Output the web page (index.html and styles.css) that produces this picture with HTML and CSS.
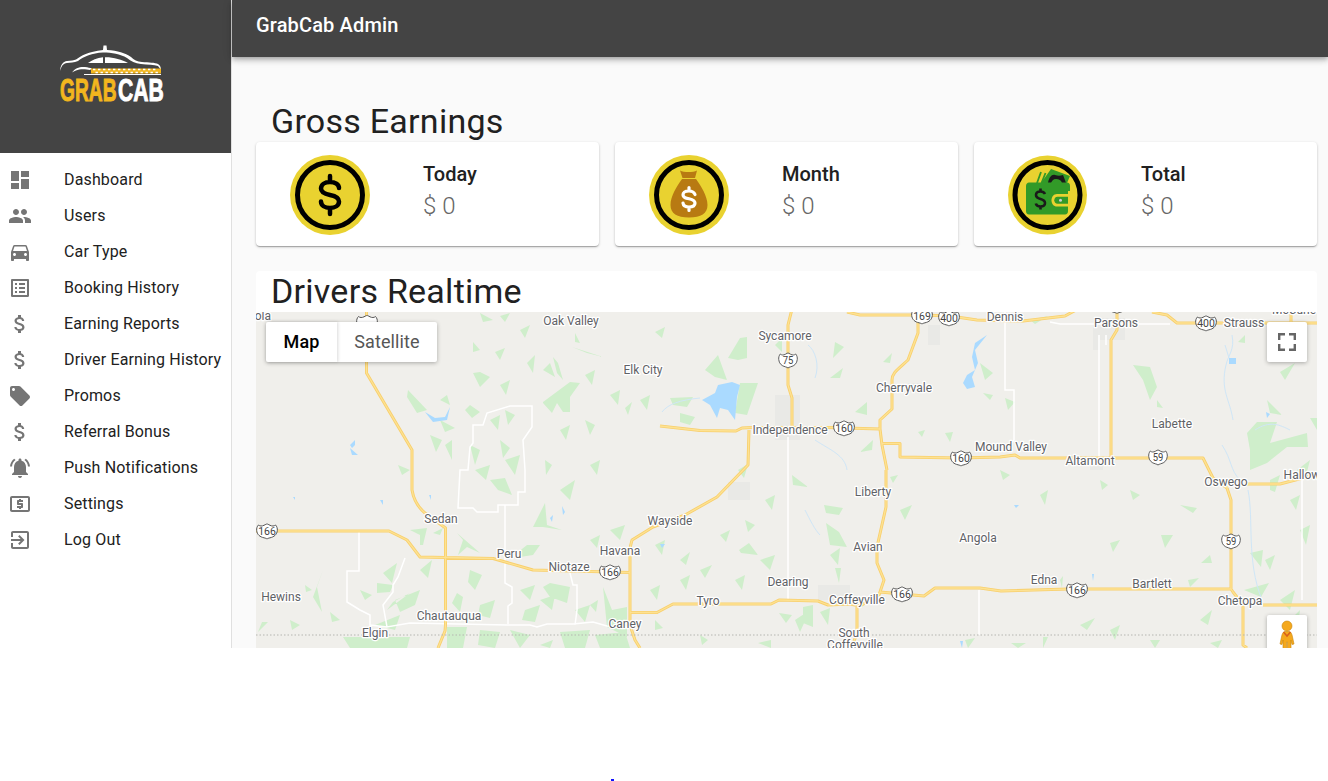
FILE: index.html
```html
<!DOCTYPE html>
<html lang="en">
<head>
<meta charset="utf-8">
<title>GrabCab Admin</title>
<link rel="stylesheet" href="styles.css">
</head>
<body>
<div class="app">
  <aside class="drawer">
    <div class="brand">
      <svg class="logo" viewBox="56 42 112 62" width="112" height="62">
        <path class="logo-w" d="M60 71C60.500 65 63 61.500 67 61C71 60.500 74 60.500 76 59.500C81 56 88 51.500 103 50L103.500 45.500H106.500L107 50C118 50.500 125 53 131 57C134 60 137 61.500 142 62C149 62.500 155 62.500 158 64C160.500 65.500 161 68 161 70L158 66C154 65 148 64.500 141 64C135 63.500 131 61 127 58C120 54 112 52.500 103 52.500C92 53 84 56.500 78 61C74 62.800 70 62.800 67 63C63 63.500 61.500 66 60 71Z"/>
        <path class="logo-w" d="M88 63C92 60 97 58 103 57.300V63ZM105 57.200C113 57 122 59.500 128 63H105Z"/>
        <path class="logo-w" d="M72 72.500C75 68 80 66.500 85 67C88 67.300 90 68 92 68.500L90 70C86 69 80 68.500 76 70.500C74.500 71 73 72 72 72.500Z"/>
        <rect class="logo-y" x="91" y="68.500" width="70" height="5"/>
        <path class="logo-check" d="M93 69.500h2.400M98 69.500h2.400M103 69.500h2.400M108 69.500h2.400M113 69.500h2.400M118 69.500h2.400M123 69.500h2.400M128 69.500h2.400M133 69.500h2.400M138 69.500h2.400M143 69.500h2.400M148 69.500h2.400M153 69.500h2.400M95.500 72.500h2.400M100.500 72.500h2.400M105.500 72.500h2.400M110.500 72.500h2.400M115.500 72.500h2.400M120.500 72.500h2.400M125.500 72.500h2.400M130.500 72.500h2.400M135.500 72.500h2.400M140.500 72.500h2.400M145.500 72.500h2.400M150.500 72.500h2.400M155.500 72.500h2.400"/>
        <rect class="logo-w" x="84" y="74" width="77" height="1"/>
        <text class="logo-t logo-grab" transform="translate(60 101) scale(.6 1)">GRAB</text>
        <text class="logo-t logo-cab" transform="translate(118 101) scale(.66 1)">CAB</text>
      </svg>
    </div>
    <nav class="menu">
      <a class="item"><svg class="ico" viewBox="0 0 24 24"><path d="M3 13h8V3H3v10zm0 8h8v-6H3v6zm10 0h8V11h-8v10zm0-18v6h8V3h-8z"/></svg><span>Dashboard</span></a>
      <a class="item"><svg class="ico" viewBox="0 0 24 24"><path d="M16 11c1.660 0 2.990-1.340 2.990-3S17.660 5 16 5c-1.660 0-3 1.340-3 3s1.340 3 3 3zm-8 0c1.660 0 2.990-1.340 2.990-3S9.660 5 8 5C6.340 5 5 6.340 5 8s1.340 3 3 3zm0 2c-2.330 0-7 1.170-7 3.500V19h14v-2.500c0-2.330-4.670-3.500-7-3.500zm8 0c-.290 0-.620.020-.970.050 1.160.840 1.970 1.970 1.970 3.450V19h6v-2.500c0-2.330-4.670-3.500-7-3.500z"/></svg><span>Users</span></a>
      <a class="item"><svg class="ico" viewBox="0 0 24 24"><path d="M18.920 6.010C18.720 5.420 18.160 5 17.500 5h-11c-.660 0-1.210.420-1.420 1.010L3 12v8c0 .550.450 1 1 1h1c.550 0 1-.450 1-1v-1h12v1c0 .550.450 1 1 1h1c.550 0 1-.450 1-1v-8l-2.080-5.990zM6.500 16c-.830 0-1.500-.670-1.500-1.500S5.670 13 6.500 13s1.500.670 1.500 1.500S7.330 16 6.500 16zm11 0c-.830 0-1.500-.670-1.500-1.500s.670-1.500 1.500-1.500 1.500.670 1.500 1.500-.670 1.500-1.500 1.500zM5 11l1.500-4.500h11L19 11H5z"/></svg><span>Car Type</span></a>
      <a class="item"><svg class="ico" viewBox="0 0 24 24"><path d="M19 5v14H5V5h14m1.100-2H3.900c-.500 0-.900.400-.900.900v16.200c0 .400.400.900.900.900h16.200c.400 0 .900-.500.900-.900V3.900c0-.500-.500-.900-.900-.900zM11 7h6v2h-6V7zm0 4h6v2h-6v-2zm0 4h6v2h-6v-2zM7 7h2v2H7V7zm0 4h2v2H7v-2zm0 4h2v2H7v-2z"/></svg><span>Booking History</span></a>
      <a class="item"><svg class="ico" viewBox="0 0 24 24"><path d="M11.800 10.900c-2.270-.590-3-1.200-3-2.150 0-1.090 1.010-1.850 2.700-1.850 1.780 0 2.440.850 2.500 2.100h2.210c-.070-1.720-1.120-3.300-3.210-3.810V3h-3v2.160c-1.940.420-3.500 1.680-3.500 3.610 0 2.310 1.910 3.460 4.700 4.130 2.500.600 3 1.480 3 2.410 0 .690-.490 1.790-2.700 1.790-2.060 0-2.870-.920-2.980-2.100h-2.200c.120 2.190 1.760 3.420 3.680 3.830V21h3v-2.150c1.950-.370 3.500-1.500 3.500-3.550 0-2.840-2.430-3.810-4.700-4.400z"/></svg><span>Earning Reports</span></a>
      <a class="item"><svg class="ico" viewBox="0 0 24 24"><path d="M11.800 10.900c-2.270-.590-3-1.200-3-2.150 0-1.090 1.010-1.850 2.700-1.850 1.780 0 2.440.850 2.500 2.100h2.210c-.070-1.720-1.120-3.300-3.210-3.810V3h-3v2.160c-1.940.420-3.500 1.680-3.500 3.610 0 2.310 1.910 3.460 4.700 4.130 2.500.600 3 1.480 3 2.410 0 .690-.490 1.790-2.700 1.790-2.060 0-2.870-.920-2.980-2.100h-2.200c.120 2.190 1.760 3.420 3.680 3.830V21h3v-2.150c1.950-.370 3.500-1.500 3.500-3.550 0-2.840-2.430-3.810-4.700-4.400z"/></svg><span>Driver Earning History</span></a>
      <a class="item"><svg class="ico" viewBox="0 0 24 24"><path d="M21.410 11.580l-9-9C12.050 2.220 11.550 2 11 2H4c-1.100 0-2 .900-2 2v7c0 .550.220 1.050.590 1.420l9 9c.360.360.860.580 1.410.580.550 0 1.050-.220 1.410-.590l7-7c.370-.360.590-.860.590-1.410 0-.550-.230-1.060-.590-1.420zM5.500 7C4.670 7 4 6.330 4 5.500S4.670 4 5.500 4 7 4.670 7 5.500 6.330 7 5.500 7z"/></svg><span>Promos</span></a>
      <a class="item"><svg class="ico" viewBox="0 0 24 24"><path d="M11.800 10.900c-2.270-.590-3-1.200-3-2.150 0-1.090 1.010-1.850 2.700-1.850 1.780 0 2.440.850 2.500 2.100h2.210c-.070-1.720-1.120-3.300-3.210-3.810V3h-3v2.160c-1.940.420-3.500 1.680-3.500 3.610 0 2.310 1.910 3.460 4.700 4.130 2.500.600 3 1.480 3 2.410 0 .690-.490 1.790-2.700 1.790-2.060 0-2.870-.920-2.980-2.100h-2.200c.120 2.190 1.760 3.420 3.680 3.830V21h3v-2.150c1.950-.370 3.500-1.500 3.500-3.550 0-2.840-2.430-3.810-4.700-4.400z"/></svg><span>Referral Bonus</span></a>
      <a class="item"><svg class="ico" viewBox="0 0 24 24"><path d="M7.580 4.080L6.150 2.650C3.750 4.480 2.170 7.300 2.030 10.500h2c.150-2.650 1.510-4.970 3.550-6.420zm12.390 6.420h2c-.150-3.200-1.730-6.020-4.120-7.850l-1.420 1.430c2.020 1.450 3.390 3.770 3.540 6.420zM18 11c0-3.070-1.640-5.640-4.500-6.320V4c0-.830-.670-1.500-1.500-1.500s-1.500.670-1.500 1.500v.680C7.630 5.360 6 7.920 6 11v5l-2 2v1h16v-1l-2-2v-5zm-6 11c.140 0 .270-.010.400-.040.650-.140 1.180-.580 1.440-1.180.100-.240.150-.500.150-.780h-4c.010 1.100.900 2 2.010 2z"/></svg><span>Push Notifications</span></a>
      <a class="item"><svg class="ico" viewBox="0 0 24 24"><path d="M11 17h2v-1h1c.550 0 1-.450 1-1v-3c0-.550-.450-1-1-1h-3v-1h4V8h-2V7h-2v1h-1c-.550 0-1 .450-1 1v3c0 .550.450 1 1 1h3v1H9v2h2v1zm9-13H4c-1.110 0-1.990.890-1.990 2L2 18c0 1.110.890 2 2 2h16c1.110 0 2-.890 2-2V6c0-1.110-.890-2-2-2zm0 14H4V6h16v12z"/></svg><span>Settings</span></a>
      <a class="item"><svg class="ico" viewBox="0 0 24 24"><path d="M10.090 15.590L11.500 17l5-5-5-5-1.410 1.410L12.670 11H3v2h9.670l-2.580 2.590zM19 3H5c-1.110 0-2 .900-2 2v4h2V5h14v14H5v-4H3v4c0 1.100.890 2 2 2h14c1.100 0 2-.900 2-2V5c0-1.100-.900-2-2-2z"/></svg><span>Log Out</span></a>
    </nav>
  </aside>
  <div class="content">
    <header class="appbar">GrabCab Admin</header>
    <main class="main">
      <h2 class="title">Gross Earnings</h2>
      <section class="cards">
        <article class="card">
          <svg class="badge" viewBox="0 0 80 80" width="80" height="80">
            <circle class="b-y" cx="40" cy="40" r="40"/><circle class="b-r" cx="40" cy="40" r="32.500"/>
            <path class="b-d" d="M49 33C49 29.500 45 27 40 27C35 27 31 29.500 31 33.500C31 37.500 35 39 40 40C45 41 49 42.500 49 46.500C49 50.500 45 53 40 53C35 53 31 50.500 31 46.500M40 21V27M40 53V59"/>
          </svg>
          <div class="stat"><div class="stat-name">Today</div><div class="stat-val">$ 0</div></div>
        </article>
        <article class="card">
          <svg class="badge" viewBox="0 0 80 80" width="80" height="80">
            <circle class="b-y" cx="40" cy="40" r="40"/><circle class="b-r" cx="40" cy="40" r="32.500"/>
            <path class="b-bag" d="M31 15.500C35 17.500 44 17.500 48 15.500L46 23H33.500ZM33 24H47C52 31 58.500 41 58.500 50C58.500 58.500 52 62.500 40 62.500C28 62.500 21.500 58.500 21.500 50C21.500 41 28 31 33 24Z"/>
            <path class="b-s" d="M46 39.500C45 37 43 36 40 36C36.500 36 34 37.500 34 40C34 42.500 36.500 43 40 43.700C43.500 44.500 46 45.500 46 48C46 50.500 43.500 52 40 52C36.500 52 34.300 50.500 34 48M40 32.500V36M40 52V55.500"/>
          </svg>
          <div class="stat"><div class="stat-name">Month</div><div class="stat-val">$ 0</div></div>
        </article>
        <article class="card">
          <svg class="badge" viewBox="0 0 80 80" width="80" height="80">
            <circle class="b-y" cx="39.500" cy="40" r="39.500"/><circle class="b-r" cx="39.500" cy="40" r="32.500"/>
            <path class="w-g" d="M33 28L43 14L62 21L59 28Z"/>
            <path class="w-k" d="M40 28C41 22 44 19 47 20C50 21 52 21 55 20C56 22 57 25 58 28H54C53 25 51 24 48 24C45 24 44 26 43 28Z"/>
            <path class="w-l" d="M29 28L33 17M33.500 28L37.500 18M38 28L40.500 21"/>
            <path class="w-g" d="M18 31C18 29 19.500 27.500 21 27.500H59C61 27.500 62 29 62 31V36H60V56C60 58 59 59.500 57 59.500H21C19 59.500 18 58 18 56Z"/>
            <path class="w-f" d="M49 39H62V51.500H49C45.500 51.500 43.500 48.500 43.500 45.200C43.500 42 45.500 39 49 39Z"/>
            <path class="w-g" d="M49.500 41.800H60V48.700H49.500C47.500 48.700 46.300 47 46.300 45.200C46.300 43.500 47.500 41.800 49.500 41.800Z"/>
            <circle class="w-dot" cx="52.500" cy="45.300" r="1.500"/>
            <path class="w-s" d="M37 39C36 37 35 36.500 32.500 36.500C29.800 36.500 28 37.800 28 40C28 42.500 30 43.300 32.500 44C35 44.700 37 45.700 37 48C37 50.300 35 51.500 32.500 51.500C30 51.500 28.300 50.500 27.800 48.500M32.500 33.500V36.500M32.500 51.500V54.500"/>
          </svg>
          <div class="stat"><div class="stat-name">Total</div><div class="stat-val">$ 0</div></div>
        </article>
      </section>
      <section class="panel">
        <h2 class="title title-panel">Drivers Realtime</h2>
        <div class="map">
          <svg class="map-art" viewBox="256 312 1061 336" width="1061" height="336">
            <defs>
              <path id="sh3" d="M1.500 1.500C3 2.800 5 2.800 7 1.800C8.500 1 9.500.5 10 .5C10.500.5 11.500 1 13 1.800C15 2.800 17 2.800 18.500 1.500C20 3 20.500 5 20.300 7C20 11 17 13.500 13 14.300C11.800 14.600 10.500 15 10 15.500C9.500 15 8.200 14.600 7 14.300C3 13.500 0 11 -.3 7C-.5 5 0 3 1.500 1.500Z"/>
              <path id="roads" d="M366.500 305V373L412 450V490C414 502 419 508 425 513L445.500 528V625L445 631L438 648M256 531H389L407 540L420 557L493 558.500L533 570L630 572.500M749 430L748 465L717 497L685 515L653 527L632 540L630 548V625L635 640L640 648M630 612.500H657L673 604H771L779 600L818 601L828 605L850 604L860 606L879 595L880 592L924 596L935 588H980L1001 591L1069 589H1231M886 470V507L877 547V563L884 580L880 592M1227 488L1231 500V589L1233 592L1243 605V645L1247 648M1263 605H1317M857 606V632L852 648M793 305L788 325V385L792 398V427M660 426L700 430.500L736 431L742 428L752 427.500H828L880 429L882 445L887 470M880 429V420L892 409V380C892 373 897 370 908 360L918 333V316M847 312L860 315H922L950 316L977 320L1023 321L1065 316L1076 310M882 443.500H900V457L960 458L1000 457L1015 455L1020 458L1203 458L1213 478L1227 488M1247 484H1280L1303 478L1320 472M1117 305V330L1111 340V457M1152 312L1167 315L1177 323H1320M1291 312V323"/>
            </defs>
            <rect class="m-bg" x="256" y="312" width="1061" height="336"/>
            <path class="m-town" d="M775 395H800V440H775ZM928 325H940V345H928ZM1093 318H1125V340H1100V350H1093ZM818 585H850V600H818ZM728 482H750V500H728ZM908 383H920V392H908ZM1090 462H1103V470H1090Z"/>
            <path class="m-green" d="M408 390L427 410L417 413L407 397ZM543 402L570 382L580 383L570 397V412H563L557 403L552 413L543 403ZM572 347L603 357L587 353ZM527 363L535 355L533 373ZM543 370L550 363L555 377ZM553 357L558 363L563 380L557 373ZM473 373L480 372L490 377L480 387ZM473 342L480 350L473 352ZM575 333L580 343L575 342ZM410 530L427 528L423 545H420V535ZM433 533L443 528L440 535ZM457 533L480 553L467 547L458 555L463 540ZM533 527L545 503L547 525L562 530L543 527ZM517 553L527 545H540L533 555L520 557ZM377 583L393 585L390 592L377 593ZM383 573L397 563L392 583ZM387 610L410 593L393 602ZM313 597L323 570L317 587L322 612ZM550 583L570 587L567 603L550 597L543 587ZM457 593L463 597L460 612L452 603ZM603 587L612 610L627 607V637L607 627ZM343 637H410L407 648H350ZM447 627H467L463 648H447ZM728 358L740 338L747 337V358L738 360ZM705 370L718 355L727 380L715 377ZM740 383H758L747 415L735 413ZM670 398L693 397L687 407L673 405ZM680 413L695 417L690 425L680 422ZM833 358L835 342L844 347ZM855 412L867 402V415ZM883 362L892 353L890 363ZM860 452L873 440L872 450ZM830 378L843 368L840 378ZM980 363L993 373L985 380ZM983 393L993 395L990 400ZM945 433L953 432L950 442ZM918 432L925 430L922 437ZM890 477L898 475L893 483ZM792 475L808 487L793 485ZM1133 365L1150 367L1157 387L1150 400L1143 380ZM1157 400L1163 408L1157 407ZM1247 433L1257 422H1277L1270 443L1307 433L1308 447H1287L1267 463L1250 470V450ZM1267 400L1282 415L1270 413ZM1310 418H1317V430ZM1238 342L1245 335V343ZM1280 372L1295 363L1285 380ZM824 505L843 508L839 515L826 513ZM826 523L839 532L847 547L830 545ZM739 550L749 543L758 555L741 553ZM835 568H841L839 583ZM779 613L792 615L786 623ZM803 607L813 605V627L803 623ZM1161 535H1173L1165 548ZM1180 505L1197 508L1193 513ZM1250 553L1263 550L1261 567ZM1188 580L1199 578L1190 587ZM1244 590L1269 583L1261 597ZM1201 563L1210 555L1212 563ZM1011 643H1026L1018 648ZM1043 637H1048L1043 648ZM758 643L771 640V648ZM1210 643L1222 640L1218 648ZM1150 640H1160L1155 648ZM465 410L470 405L480 412L472 418ZM440 400L447 395L450 405ZM490 480L505 478L512 495L498 490ZM470 445L480 450L475 465ZM500 440L510 448L503 458ZM305 585L312 590L306 592ZM262 622H268L258 632ZM330 612L340 620L332 622ZM655 332L665 327L662 338ZM625 408L632 402L628 415ZM775 345L782 338V352ZM1005 398L1015 402L1008 410ZM1290 620L1300 610L1298 625ZM1060 580L1063 576L1062 588ZM965 640L975 638L968 648ZM700 635L708 640L702 645ZM590 605L598 600L596 612ZM1080 625L1095 618L1087 630ZM1110 543L1120 540L1113 552ZM680 560L690 552L686 565ZM738 470L748 464L744 478ZM1030 320L1048 316L1035 324ZM540 645L553 640L550 648ZM655 620L663 628L655 630ZM480 313L493 320L483 322ZM500 316L510 313L505 322ZM520 330L530 325L525 338ZM585 375L595 370L592 385ZM500 385L510 380L506 395ZM495 352L505 348L500 360ZM440 420L455 428L445 432ZM430 435L442 440L436 452ZM445 445L452 440V460ZM398 465L410 470L402 475ZM490 420L500 415L498 430ZM505 410L515 415L508 425ZM475 470L490 465L486 480ZM505 460L520 455L515 475ZM560 430L570 425L566 440ZM585 420L595 425L590 435ZM610 395L620 390L618 405ZM640 400L650 395L647 410ZM590 465L600 460L597 475ZM560 490L575 480L570 500ZM545 460L552 465L546 475ZM610 530L625 525L620 540ZM590 540L600 535L597 548ZM655 545L665 540L662 555ZM680 580L690 575L686 590ZM650 590L660 585L657 600ZM700 570L712 565L705 578ZM735 580L745 575L742 590ZM760 560L775 555L770 570ZM745 520L755 525L748 532ZM765 500L775 495L772 510ZM720 535L730 530L726 542ZM360 590L372 595L365 600ZM395 600L420 590L415 605L400 612ZM420 570L432 560L428 578ZM470 570L482 575L475 590L468 582ZM480 605L495 600L490 618L478 615ZM520 590L535 585L530 600ZM525 610L540 605L535 622L522 620ZM540 600L555 595L552 610ZM575 610L590 605L585 622ZM375 625L400 615L395 630ZM480 630L500 632L495 648L478 645ZM510 630L530 635L520 648ZM560 632L590 630L585 648H565ZM595 635L625 632L630 648H600ZM290 620L300 625L292 630ZM900 510L912 505L905 520ZM830 555L840 548L838 565ZM795 620L810 610L800 632ZM820 612L830 608L828 625ZM1000 470L1010 475L1003 480ZM1040 495L1048 490L1045 505ZM1100 480L1108 485L1102 490ZM1130 490L1140 495L1133 500ZM1297 470L1310 460L1305 480ZM1290 500L1300 495L1296 510ZM1270 480L1280 475L1275 492L1270 490ZM1300 530L1310 525L1306 545ZM1265 560L1275 555L1270 570ZM1280 600L1295 590L1290 610ZM1200 620L1212 610L1208 625ZM1110 630L1120 625L1115 640Z"/>
            <path class="m-water" d="M702 400L715 393L718 385L732 382L740 385L737 397L735 420L728 410L720 408L717 418L710 405ZM987 335L975 343L972 357L975 370L967 375L963 383L967 389L975 387L972 377L978 363L975 350ZM425 412L433 422L447 420L450 407L445 417L435 418ZM1229 358H1236V364H1229ZM350 445L355 440V445L352 448ZM350 448L358 455L352 455ZM1266 412L1270 414L1267 418ZM380 500H383V505ZM293 497H295V500ZM429 495H431V500ZM562 506L565 512L563 515ZM550 518L553 515L552 522ZM1092 574H1094L1093 581ZM660 544H665L662 548ZM960 641H963L962 648ZM1014 505H1019L1016 508Z"/>
            <path class="m-river" d="M662 412C668 404 680 400 700 398M808 345C815 350 820 365 815 378M1232 335C1235 350 1228 355 1226 365C1220 390 1230 400 1233 420M1222 445C1232 460 1230 470 1240 480M815 440C830 450 845 455 847 470M1255 430C1270 420 1280 425 1290 430M1225 345L1229 358M1248 490C1254 520 1246 560 1262 600M805 510C810 520 815 530 820 535"/>
            <path class="m-white" d="M532 406H510L487 413L483 425H473V443L470 447L468 470H460L458 508H473L477 512H498V505H518V492H525V470L523 440L532 427ZM505 505V583L512 587V603L508 606V624M405 558L398 577L393 585V592L383 605L387 627L410 623L507 625H530L537 627L547 624H573L593 622L607 626L627 627M359 531V571H347V602L360 610L370 615V625L387 627M570 573L573 585H577V610L575 625M788 437V600M979 590V635M1050 322L1060 324H1170M1099 335V457M1106 335V345M1005 312V390H1014V440L1010 445M1302 480V600"/>
            <use href="#roads" class="m-road-o"/>
            <use href="#roads" class="m-road-i"/>
            <path class="m-state" d="M256 635H1317"/>
            <g class="lbls">
              <text x="271" y="320" class="end">ola</text>
              <text x="571" y="325">Oak Valley</text>
              <text x="785" y="340">Sycamore</text>
              <text x="643" y="374">Elk City</text>
              <text x="904" y="392">Cherryvale</text>
              <text x="790" y="434">Independence</text>
              <text x="1011" y="451">Mound Valley</text>
              <text x="1090" y="465">Altamont</text>
              <text x="1172" y="428">Labette</text>
              <text x="1226" y="486">Oswego</text>
              <text x="873" y="496">Liberty</text>
              <text x="670" y="525">Wayside</text>
              <text x="441" y="523">Sedan</text>
              <text x="509" y="558">Peru</text>
              <text x="620" y="555">Havana</text>
              <text x="569" y="571">Niotaze</text>
              <text x="868" y="551">Avian</text>
              <text x="978" y="542">Angola</text>
              <text x="788" y="586">Dearing</text>
              <text x="1044" y="584">Edna</text>
              <text x="1152" y="588">Bartlett</text>
              <text x="708" y="605">Tyro</text>
              <text x="857" y="604">Coffeyville</text>
              <text x="1240" y="605">Chetopa</text>
              <text x="281" y="601">Hewins</text>
              <text x="449" y="620">Chautauqua</text>
              <text x="625" y="628">Caney</text>
              <text x="375" y="637">Elgin</text>
              <text x="854" y="637">South</text>
              <text x="855" y="649">Coffeyville</text>
              <text x="1005" y="321">Dennis</text>
              <text x="1116" y="327">Parsons</text>
              <text x="1244" y="327">Strauss</text>
              <text x="1294" y="314">McCune</text>
              <text x="1302" y="479">Hallow</text>
            </g>
            <g class="shields">
              <g transform="translate(912 308.500)"><use href="#sh3"/><text x="10" y="11.500">169</text></g>
              <g transform="translate(939 310.500)"><use href="#sh3"/><text x="10" y="11.500">400</text></g>
              <g transform="translate(1196 315.500)"><use href="#sh3"/><text x="10" y="11.500">400</text></g>
              <g transform="translate(779 352.500) scale(.9 1)"><use href="#sh3"/><text x="10" y="11.500">75</text></g>
              <g transform="translate(834 420.500)"><use href="#sh3"/><text x="10" y="11.500">160</text></g>
              <g transform="translate(951 450.500)"><use href="#sh3"/><text x="10" y="11.500">160</text></g>
              <g transform="translate(1149 449.500) scale(.9 1)"><use href="#sh3"/><text x="10" y="11.500">59</text></g>
              <g transform="translate(257 523.500)"><use href="#sh3"/><text x="10" y="11.500">166</text></g>
              <g transform="translate(600 564.500)"><use href="#sh3"/><text x="10" y="11.500">166</text></g>
              <g transform="translate(892 586.500)"><use href="#sh3"/><text x="10" y="11.500">166</text></g>
              <g transform="translate(1067 582.500)"><use href="#sh3"/><text x="10" y="11.500">166</text></g>
              <g transform="translate(1222 533.500) scale(.9 1)"><use href="#sh3"/><text x="10" y="11.500">59</text></g>
              <g transform="translate(1107 298)"><use href="#sh3"/></g>
              <g transform="translate(357 315)"><use href="#sh3"/></g>
            </g>
          </svg>
          <div class="maptype">
            <div class="mt mt-on">Map</div>
            <div class="mt mt-sat">Satellite</div>
          </div>
          <div class="ctl ctl-full">
            <svg viewBox="0 0 18 18" width="18" height="18"><path class="fs" d="M1.200 7V1.200H7M11 1.200H16.800V7M16.800 11V16.800H11M7 16.800H1.200V11"/></svg>
          </div>
          <div class="ctl ctl-peg">
            <svg viewBox="0 0 18 34" width="18" height="34"><circle class="peg" cx="9" cy="6" r="5"/><path class="peg" d="M6.500 11.500H11.500C13 12 14 14 14.500 17L16 24L14 24.500L13 20V33H9.400V22H8.600V33H5V20L4 24.500L2 24L3.500 17C4 14 5 12 6.500 11.500Z"/><path class="peg-n" d="M5.500 12L9 16L12.500 12"/></svg>
          </div>
        </div>
      </section>
    </main>
  </div>
</div>
<i class="speck"></i>
</body>
</html>
```
FILE: styles.css
```css
* { box-sizing: border-box; }
html, body { margin: 0; padding: 0; height: 100%; overflow: hidden; background: #fff; }
body { font-family: Roboto, "Liberation Sans", sans-serif; color: rgba(0,0,0,.87); position: relative; }

.app { display: flex; height: 648px; overflow: hidden; }

/* Drawer */
.drawer { width: 232px; flex: none; background: #fff; border-right: 1px solid #e0e0e0; }
.brand { height: 153px; background: #444; padding: 42px 0 0 56px; }
.logo { display: block; }
.logo-w { fill: #fff; }
.logo-y { fill: #f2b61e; }
.logo-check { stroke: #fff; stroke-width: 1.500; fill: none; }
.logo-t { font-family: "Liberation Sans", sans-serif; font-weight: 700; font-size: 32px; stroke-width: 1px; }
.logo-grab { fill: #f2b61e; stroke: #f2b61e; }
.logo-cab { fill: #fff; stroke: #fff; }
.menu { padding-top: 9px; }
.item { display: flex; align-items: center; height: 36px; padding-left: 8px; font-size: 16px; letter-spacing: .15px; color: #212121; white-space: nowrap; }
.item span { padding-bottom: 2px; }
.ico { width: 24px; height: 24px; margin-right: 32px; flex: none; fill: #757575; }

/* Content */
.content { flex: 1; min-width: 0; display: flex; flex-direction: column; background: #fafafa; }
.appbar { height: 57px; flex: none; background: #444; color: #fff; font-size: 20px; font-weight: 500; letter-spacing: .15px; line-height: 24px; padding: 13px 24px; position: relative; z-index: 2; box-shadow: 0 2px 4px -1px rgba(0,0,0,.2), 0 4px 5px 0 rgba(0,0,0,.14), 0 1px 10px 0 rgba(0,0,0,.12); }
.main { padding: 44px 11px 0 24px; }
.title { margin: 0; padding-left: 15px; font-size: 34px; font-weight: 400; letter-spacing: .25px; line-height: 41px; color: #212121; }
.cards { display: grid; grid-template-columns: repeat(3, 1fr); gap: 16px; }
.card { height: 104px; background: #fff; border-radius: 4px; display: flex; align-items: center; padding-left: 34px; box-shadow: 0 1px 3px 0 rgba(0,0,0,.2), 0 1px 1px 0 rgba(0,0,0,.14), 0 2px 1px -1px rgba(0,0,0,.12); }
.badge { flex: none; margin-right: 53px; margin-top: 2px; }
.stat { margin-bottom: 4px; }
.stat-name { font-size: 20px; font-weight: 500; line-height: 28px; color: #212121; }
.stat-val { font-size: 24px; font-weight: 300; line-height: 36px; color: #666; }

.b-y { fill: #e9d230; }
.b-r { fill: none; stroke: #000; stroke-width: 5; }
.b-d { fill: none; stroke: #000; stroke-width: 4.500; stroke-linecap: round; }
.b-bag { fill: #b87a12; }
.b-s { fill: none; stroke: #fff; stroke-width: 3.200; stroke-linecap: round; }
.w-g { fill: #329a28; }
.w-k { fill: #1a1a1a; }
.w-l { fill: none; stroke: #329a28; stroke-width: 1.800; }
.w-f { fill: #e9d230; }
.w-dot { fill: #ccc; }
.w-s { fill: none; stroke: #1a1a1a; stroke-width: 2.600; }

.panel { margin-top: 25px; background: #fff; border-radius: 4px 4px 0 0; }
.title-panel { height: 41px; }
.map { position: relative; height: 336px; overflow: hidden; }
.map-art { display: block; }
.m-bg { fill: #f0efeb; }
.m-town { fill: #e9e9e6; }
.m-green { fill: #cfeecb; }
.m-water { fill: #aadaff; }
.m-river { fill: none; stroke: #cfe6f7; stroke-width: 1; }
.m-white { fill: none; stroke: #fff; stroke-width: 1.500; }
.m-road-o { fill: none; stroke: #f8cf6c; stroke-width: 3; stroke-linejoin: round; }
.m-road-i { fill: none; stroke: #fde293; stroke-width: 1.300; stroke-linejoin: round; }
.m-state { stroke: #b5b5b0; stroke-width: 1; stroke-dasharray: 1.500 2; fill: none; }
.lbls text { font-family: Roboto, sans-serif; font-size: 12px; fill: #5f6266; text-anchor: middle; stroke: #fff; stroke-width: 2.500px; stroke-linejoin: round; paint-order: stroke; }
.lbls text.end { text-anchor: end; }
.shields use { fill: #fff; stroke: #555; stroke-width: 1; }
.shields text { font-family: Roboto, sans-serif; font-size: 10.500px; fill: #444; text-anchor: middle; }

.maptype { position: absolute; left: 10px; top: 10px; display: flex; height: 40px; background: #fff; border-radius: 2px; box-shadow: 0 1px 4px rgba(0,0,0,.3); font-size: 18px; letter-spacing: .1px; line-height: 40px; color: #565656; }
.mt { width: 100px; text-align: center; }
.mt-on { width: 71px; font-weight: 500; color: #000; box-shadow: 1px 0 3px rgba(0,0,0,.15); }
.ctl { position: absolute; right: 10px; width: 40px; height: 40px; background: #fff; border-radius: 2px; box-shadow: 0 1px 4px rgba(0,0,0,.3); display: flex; align-items: center; justify-content: center; }
.ctl-full { top: 10px; }
.ctl-peg { top: 303px; align-items: flex-start; padding-top: 5px; }
.fs { fill: none; stroke: #666; stroke-width: 2.400; }
.peg { fill: #f5a81c; stroke: #c8860f; stroke-width: .6; }
.peg-n { fill: none; stroke: #d8601a; stroke-width: 1.500; }
.speck { position: absolute; left: 611px; top: 779px; width: 3px; height: 2px; background: #11f; }
```
